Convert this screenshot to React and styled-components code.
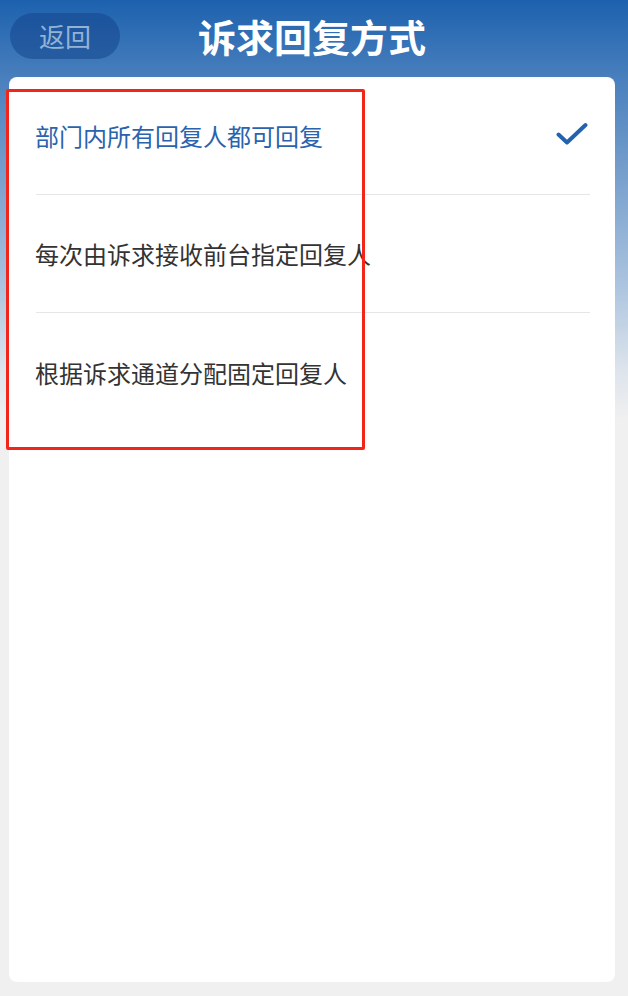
import React from "react";
import styled, { createGlobalStyle } from "styled-components";

const Global = createGlobalStyle`
  html, body { margin: 0; padding: 0; }
  body {
    font-family: "Noto Sans CJK SC", "Noto Sans", sans-serif;
    background: #f0f0f0;
  }
`;

const Page = styled.div`
  position: relative;
  height: 996px;
  display: flex;
  flex-direction: column;
  background: linear-gradient(180deg, #1d61ae 0px, #4a80bd 80px, #a9c2de 280px, #dde4ec 370px, #f0f0f0 420px);
  box-sizing: border-box;
  padding: 0 13px 14px 9px;
`;

const Header = styled.header`
  height: 77px;
  display: grid;
  grid-template-columns: 1fr auto 1fr;
  align-items: center;
`;

const BackButton = styled.button`
  justify-self: start;
  width: 110px;
  height: 46px;
  margin-left: 1px;
  margin-top: -6px;
  border: none;
  border-radius: 23px;
  background: rgba(20, 70, 140, 0.55);
  color: #93b3d6;
  font-family: inherit;
  font-size: 26px;
  padding: 0;
  line-height: 46px;
`;

const Title = styled.h1`
  margin: -6px 0 0;
  color: #fff;
  font-size: 38px;
  font-weight: 700;
  letter-spacing: 0;
`;

const Card = styled.div`
  flex: 1;
  background: #fff;
  border-radius: 8px;
  padding: 0 25px 0 27px;
`;

const Row = styled.div`
  height: 118px;
  display: flex;
  align-items: center;
  justify-content: space-between;
  border-bottom: ${(p) => (p.$last ? "none" : "1px solid #e6e6e6")};
  color: ${(p) => (p.$active ? "#2a63ae" : "#333")};
  font-size: 24px;
  box-sizing: border-box;
  padding-bottom: 0;
`;

const Label = styled.span`
  margin-left: -1px;
`;

const Check = styled.svg`
  width: 32px;
  height: 24px;
  margin-right: 2px;
  margin-top: -4px;
`;

const Annotation = styled.div`
  position: absolute;
  left: 6px;
  top: 89px;
  width: 359px;
  height: 361px;
  border: 3px solid #f3241a;
  border-radius: 2px;
  box-sizing: border-box;
  pointer-events: none;
`;

const options = [
  "部门内所有回复人都可回复",
  "每次由诉求接收前台指定回复人",
  "根据诉求通道分配固定回复人",
];

export default function App() {
  return (
    <>
      <Global />
      <Page>
        <Header>
          <BackButton>返回</BackButton>
          <Title>诉求回复方式</Title>
          <span />
        </Header>
        <Card>
          {options.map((t, i) => (
            <Row key={t} $active={i === 0} $last={i === options.length - 1}>
              <Label>{t}</Label>
              {i === 0 && (
                <Check viewBox="0 0 32 24">
                  <path
                    d="M2.5 12.5 L11 20.5 L29.5 3"
                    fill="none"
                    stroke="#2363ae"
                    strokeWidth="4"
                    strokeLinecap="round"
                    strokeLinejoin="round"
                  />
                </Check>
              )}
            </Row>
          ))}
        </Card>
        <Annotation />
      </Page>
    </>
  );
}
